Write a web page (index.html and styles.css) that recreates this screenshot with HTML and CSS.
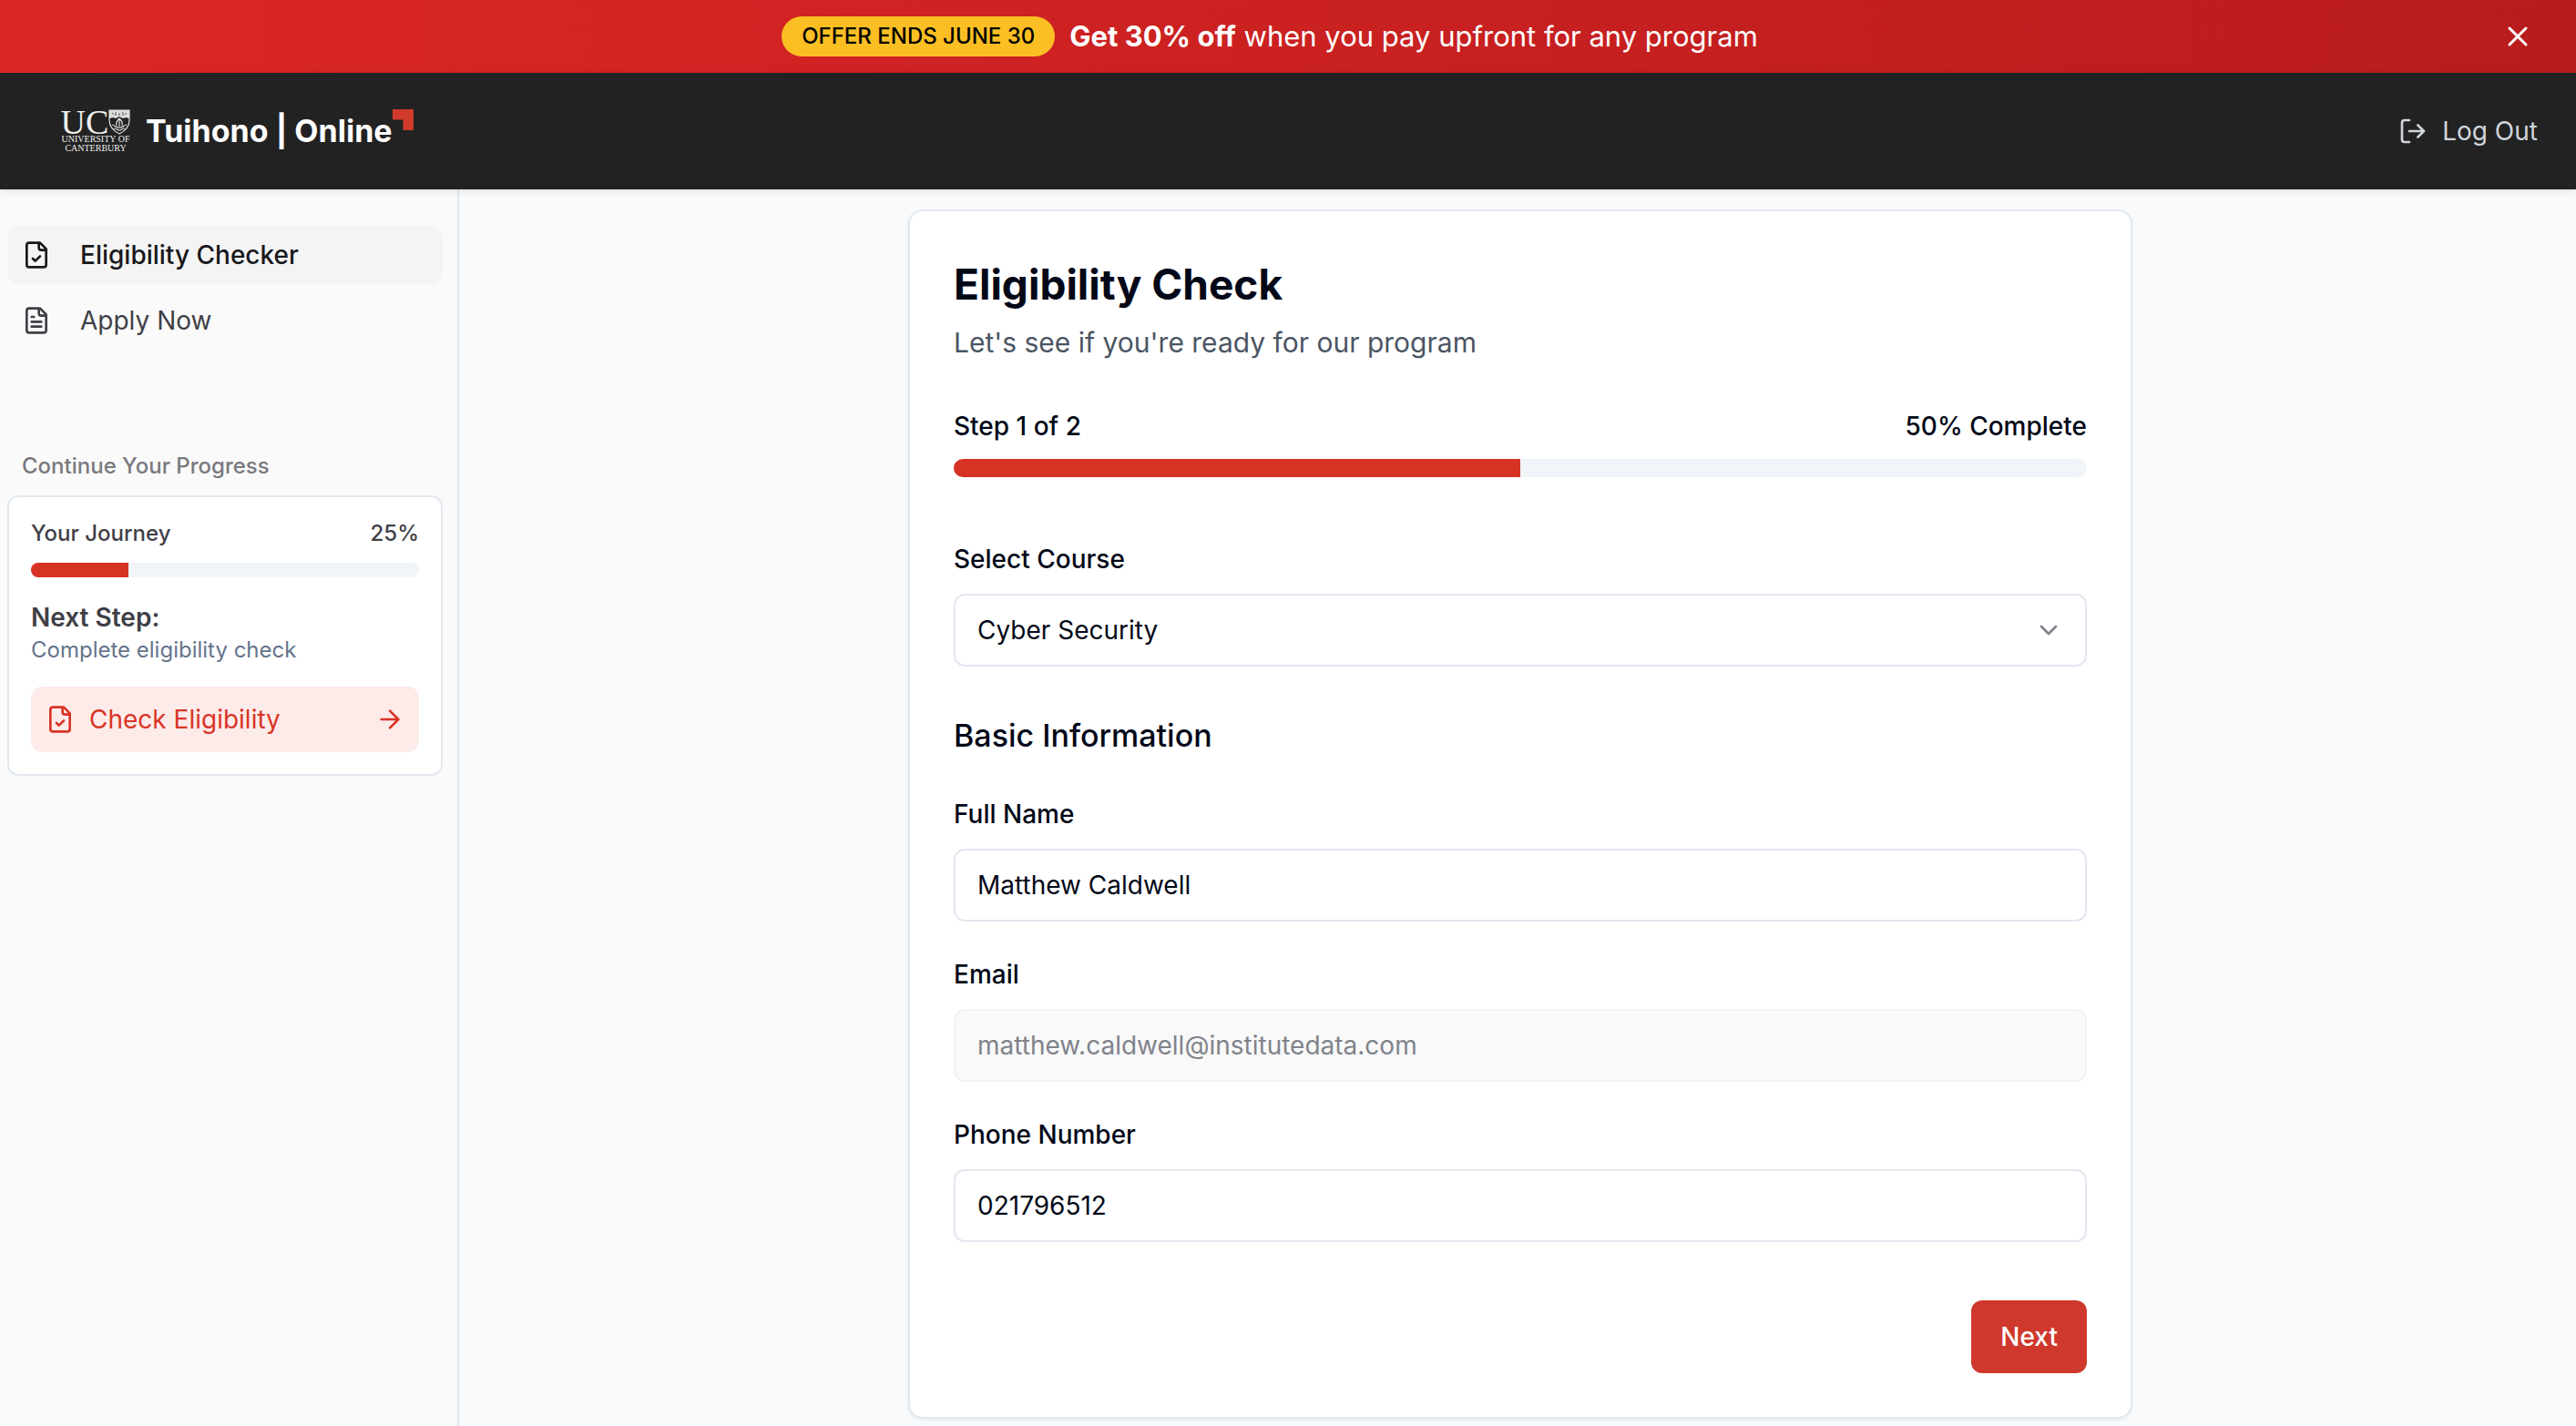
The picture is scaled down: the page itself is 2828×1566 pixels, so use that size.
FILE: index.html
```html
<!DOCTYPE html>
<html lang="en">
<head>
<meta charset="utf-8">
<meta name="viewport" content="width=device-width, initial-scale=1">
<title>Eligibility Check</title>
<link rel="stylesheet" href="styles.css">
</head>
<body>
<div class="banner">
  <p class="banner-message">
    <span class="pill">OFFER ENDS JUNE 30</span>
    <span><strong>Get 30% off</strong> when you pay upfront for any program</span>
  </p>
  <button class="banner-close" type="button" aria-label="Dismiss offer">
    <svg class="icon-close" viewBox="0 0 24 24"><path d="M18 6 6 18M6 6l12 12"/></svg>
  </button>
</div>

<header class="topbar">
  <a class="logo" href="#">
    <span class="crest">
      <span class="crest-top">
        <span class="crest-uc">UC</span>
        <svg class="shield" viewBox="0 0 24 28">
          <path d="M1 1h22v11c0 8-5 12-11 15C6 24 1 20 1 12z" fill="#222" stroke="#ddd" stroke-width="1.2"/>
          <path d="M1 1h22v9l-4-1-3 1-4-2-4 2-3-1-4 1z" fill="#ddd"/>
          <path d="M4 4l2 2M8 3v4M12 4v3M16 3v4M20 4l-2 2" stroke="#555" stroke-width="1" fill="none"/>
          <path d="M12 10c-3 3-4 5-3 8M12 10c3 3 4 5 3 8M12 12v7M4 17c3 0 4 4 8 3 4 1 5-3 8-3M6 21c3 0 4 2 6 2s3-2 6-2" stroke="#ddd" stroke-width="1.2" fill="none"/>
        </svg>
      </span>
      <span class="crest-line">UNIVERSITY OF</span>
      <span class="crest-line">CANTERBURY</span>
    </span>
    <span class="wordmark">Tuihono | Online</span>
    <svg class="corner" viewBox="0 0 24 24"><path d="M0 0h24v24H12V12H0z"/></svg>
  </a>
  <button class="logout" type="button">
    <svg class="icon" viewBox="0 0 24 24"><path d="M9 21H5a2 2 0 0 1-2-2V5a2 2 0 0 1 2-2h4M16 17l5-5-5-5M21 12H9"/></svg>
    Log Out
  </button>
</header>

<div class="layout">
  <aside class="sidebar">
    <nav class="nav">
      <a class="nav-item nav-item-active" href="#" aria-current="page">
        <svg class="icon" viewBox="0 0 24 24"><path d="M15 2H6a2 2 0 0 0-2 2v16a2 2 0 0 0 2 2h12a2 2 0 0 0 2-2V7zM14 2v4a2 2 0 0 0 2 2h4M9 15l2 2 4-4"/></svg>
        Eligibility Checker
      </a>
      <a class="nav-item" href="#">
        <svg class="icon" viewBox="0 0 24 24"><path d="M15 2H6a2 2 0 0 0-2 2v16a2 2 0 0 0 2 2h12a2 2 0 0 0 2-2V7zM14 2v4a2 2 0 0 0 2 2h4M10 9H8M16 13H8M16 17H8"/></svg>
        Apply Now
      </a>
    </nav>
    <section class="journey">
      <h2 class="journey-heading">Continue Your Progress</h2>
      <div class="journey-card">
        <div class="journey-row"><span>Your Journey</span><span>25%</span></div>
        <div class="track"><div class="track-fill" style="width:25%"></div></div>
        <h3 class="journey-next">Next Step:</h3>
        <p class="journey-text">Complete eligibility check</p>
        <a class="journey-action" href="#">
          <svg class="icon" viewBox="0 0 24 24"><path d="M15 2H6a2 2 0 0 0-2 2v16a2 2 0 0 0 2 2h12a2 2 0 0 0 2-2V7zM14 2v4a2 2 0 0 0 2 2h4M9 15l2 2 4-4"/></svg>
          <span class="journey-action-label">Check Eligibility</span>
          <svg class="icon" viewBox="0 0 24 24"><path d="M5 12h14M12 5l7 7-7 7"/></svg>
        </a>
      </div>
    </section>
  </aside>

  <main class="main">
    <form class="card">
      <h1 class="card-title">Eligibility Check</h1>
      <p class="card-subtitle">Let's see if you're ready for our program</p>
      <div class="steps"><span>Step 1 of 2</span><span>50% Complete</span></div>
      <div class="track track-large"><div class="track-fill" style="width:50%"></div></div>
      <div class="field field-course">
        <label for="course">Select Course</label>
        <div class="select-wrap">
          <select class="control" id="course"><option>Cyber Security</option></select>
          <svg class="icon chevron" viewBox="0 0 24 24"><path d="m6 9 6 6 6-6"/></svg>
        </div>
      </div>
      <h2 class="section-title">Basic Information</h2>
      <div class="fields">
        <div class="field">
          <label for="name">Full Name</label>
          <input class="control" id="name" type="text" value="Matthew Caldwell">
        </div>
        <div class="field">
          <label for="email">Email</label>
          <input class="control" id="email" type="email" value="matthew.caldwell@institutedata.com" disabled>
        </div>
        <div class="field">
          <label for="phone">Phone Number</label>
          <input class="control" id="phone" type="tel" value="021796512">
        </div>
      </div>
      <div class="actions"><button class="next" type="button">Next</button></div>
    </form>
  </main>
</div>
</body>
</html>
```
FILE: styles.css
```css
* { box-sizing: border-box; margin: 0; }

body {
  min-height: 100vh;
  display: flex;
  flex-direction: column;
  background: #f8fafc;
  color: #020817;
  font-family: Inter, "Liberation Sans", sans-serif;
  font-size: 28px;
  line-height: 40px;
}

a { color: inherit; text-decoration: none; }
button, input, select { font: inherit; color: inherit; }
button { border: 0; padding: 0; background: none; cursor: pointer; }

.icon {
  width: 32px;
  height: 32px;
  flex: none;
  fill: none;
  stroke: currentColor;
  stroke-width: 2;
  stroke-linecap: round;
  stroke-linejoin: round;
}

/* Offer banner */
.banner {
  display: flex;
  align-items: center;
  height: 80px;
  padding: 0 44px;
  background: linear-gradient(to right, #dc2626, #b91c1c);
  color: #fff;
}
.banner-message {
  flex: 1;
  display: flex;
  align-items: center;
  justify-content: center;
  gap: 16px;
  font-size: 31px;
}
.banner-message strong { font-weight: 700; }
.pill {
  padding: 6px 22px;
  border-radius: 22px;
  background: #fbbf24;
  color: #000;
  font-size: 24px;
  font-weight: 500;
  line-height: 32px;
}
.banner-close { display: grid; place-items: center; width: 40px; height: 40px; }
.icon-close {
  width: 36px;
  height: 36px;
  fill: none;
  stroke: currentColor;
  stroke-width: 2;
  stroke-linecap: round;
}

/* Header */
.topbar {
  position: relative;
  display: flex;
  align-items: center;
  justify-content: space-between;
  height: 128px;
  padding: 0 42px 0 66px;
  background: #222;
  box-shadow: 0 2px 8px rgba(0, 0, 0, .1);
}
.logo { display: flex; align-items: center; color: #fff; }
.crest {
  display: flex;
  flex-direction: column;
  align-items: center;
  width: 78px;
  font-family: "Liberation Serif", serif;
}
.crest-top { display: flex; align-items: center; height: 28px; }
.crest-uc { font-size: 38px; line-height: 28px; color: #eee; }
.shield { width: 24px; height: 28px; }
.crest-line { font-size: 10px; line-height: 10px; white-space: nowrap; color: #eee; }
.wordmark { margin-left: 16px; font-size: 34px; font-weight: 700; }
.corner { align-self: flex-start; width: 23px; height: 23px; fill: #d03a2b; }
.logout { display: flex; align-items: center; gap: 16px; color: #d1d5db; }

/* Sidebar */
.layout { flex: 1; display: flex; }
.sidebar {
  width: 504px;
  flex: none;
  padding: 40px 16px 24px 8px;
  border-right: 2px solid #e2e8f0;
  background: #fafafa;
  color: #3f3f46;
}
.nav { display: grid; gap: 8px; }
.nav-item {
  display: flex;
  align-items: center;
  gap: 32px;
  padding: 12px 16px;
  border-radius: 12px;
}
.nav-item-active { background: #f4f4f5; color: #18181b; font-weight: 500; }
.journey { padding-top: 112px; }
.journey-heading {
  padding: 0 16px 16px;
  font-size: 24px;
  font-weight: 500;
  line-height: 32px;
  color: #79797e;
}
.journey-card {
  padding: 24px;
  border: 2px solid #e2e8f0;
  border-radius: 12px;
  background: #fff;
}
.journey-row {
  display: flex;
  justify-content: space-between;
  margin-bottom: 16px;
  font-size: 24px;
  font-weight: 500;
  line-height: 32px;
}
.journey-next { margin-top: 24px; font-size: 28px; font-weight: 600; }
.journey-text { font-size: 24px; line-height: 32px; color: #64748b; }
.journey-action {
  display: flex;
  align-items: center;
  gap: 16px;
  margin-top: 24px;
  padding: 16px;
  border-radius: 12px;
  background: #fdebe9;
  color: #d93426;
}
.journey-action-label { flex: 1; }

.track { height: 16px; border-radius: 10px; background: #f1f5f9; overflow: hidden; }
.track-large { height: 20px; }
.track-fill { height: 100%; background: #d73325; }

/* Form card */
.main { flex: 1; padding: 22px 8px 8px 14px; }
.card {
  max-width: 1344px;
  margin: 0 auto;
  padding: 48px;
  border: 2px solid #e2e8f0;
  border-radius: 16px;
  background: #fff;
  box-shadow: 0 2px 4px rgba(0, 0, 0, .06);
}
.card-title { font-size: 46px; font-weight: 700; line-height: 64px; }
.card-subtitle { margin-top: 8px; font-size: 30px; line-height: 48px; color: #4b5563; }
.steps {
  display: flex;
  justify-content: space-between;
  margin: 48px 0 16px;
  font-weight: 500;
}
.field { display: grid; gap: 24px; }
.field label { font-weight: 500; line-height: 28px; }
.field-course { margin-top: 76px; }
.control {
  width: 100%;
  height: 80px;
  padding: 0 24px;
  border: 2px solid #e2e8f0;
  border-radius: 12px;
  background: #fff;
  appearance: none;
}
.control:disabled { border-color: #f1f3f8; background: #f9f9f9; color: #80838b; opacity: 1; }
.select-wrap { display: grid; align-items: center; }
.select-wrap > * { grid-area: 1 / 1; }
.chevron { justify-self: end; margin-right: 26px; opacity: .5; pointer-events: none; }
.section-title { margin-top: 48px; font-size: 34px; font-weight: 500; line-height: 56px; }
.fields { display: grid; gap: 44px; margin-top: 44px; }
.actions { display: flex; justify-content: flex-end; margin-top: 64px; }
.next {
  height: 80px;
  padding: 0 32px;
  border-radius: 12px;
  background: #cf392d;
  color: #fff;
  font-weight: 500;
}
```
